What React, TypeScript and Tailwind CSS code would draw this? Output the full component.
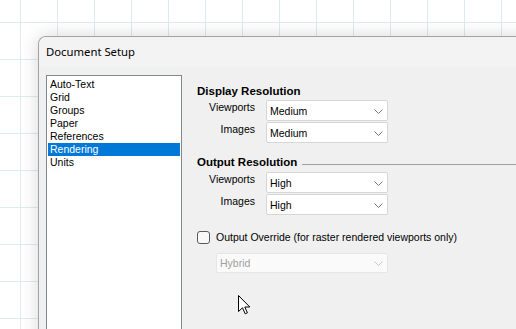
const pages = ["Auto-Text", "Grid", "Groups", "Paper", "References", "Rendering", "Units"];

function Chevron({ muted = false }: { muted?: boolean }) {
  return (
    <svg width="9" height="5" viewBox="0 0 9 5" className="shrink-0">
      <path d="M0.5 0.5 L4.5 4.5 L8.5 0.5" fill="none" stroke={muted ? "#c9c9c9" : "#767676"} strokeWidth="1" />
    </svg>
  );
}

function Combo({ value }: { value: string }) {
  return (
    <div className="flex h-[21px] w-[122px] items-center justify-between rounded-[2px] border border-[#d6d6d6] bg-white pl-[3px] pr-[4px] pt-[1px]">
      <span className="leading-[13px] text-black">{value}</span>
      <Chevron />
    </div>
  );
}

function Row({ label, value }: { label: string; value: string }) {
  return (
    <div className="flex items-start gap-[11px]">
      <span className="w-[58px] pt-[1px] text-right leading-[13px] text-black">{label}</span>
      <Combo value={value} />
    </div>
  );
}

export default function App() {
  return (
    <div className="relative h-[329px] w-[516px] overflow-hidden bg-white bg-[linear-gradient(to_right,#dcecef_1px,transparent_1px),linear-gradient(to_bottom,#dcecef_1px,transparent_1px)] bg-[size:37px_37px] bg-[position:20px_22px]">
      {/* dialog window */}
      <div className="absolute left-[38px] top-[36px] flex h-[320px] w-[500px] flex-col overflow-hidden rounded-tl-[8px] border-l border-t border-[#a3a3a3] bg-[#f0f0f0] shadow-[0_0_18px_rgba(0,0,0,0.16)]">
        <div className="flex h-[30px] shrink-0 items-center bg-[#f3f3f3] pl-[7px] font-['Noto_Sans',sans-serif] text-[11.3px] text-black">
          Document Setup
        </div>
        <div className="flex min-h-0 flex-1 pl-[7px] pt-[8px] font-['Liberation_Sans',Arial,sans-serif] text-[10.5px]">
          {/* page list */}
          <div className="h-[300px] w-[136px] shrink-0 border border-[#828790] bg-white px-px pt-[2px]">
            {pages.map((p) => (
              <div
                key={p}
                className={
                  p === "Rendering"
                    ? "h-[13px] bg-[#0078d7] pl-[2px] leading-[13px] text-white"
                    : "h-[13px] pl-[2px] leading-[13px] text-black"
                }
              >
                {p}
              </div>
            ))}
          </div>

          {/* settings */}
          <div className="flex flex-1 flex-col pl-[15px] pt-[10px]">
            <div className="h-[13px] text-[11.5px] font-bold leading-[13px] text-black">Display Resolution</div>
            <div className="mt-[2px] flex flex-col gap-[1px]">
              <Row label="Viewports" value="Medium" />
              <Row label="Images" value="Medium" />
            </div>

            <div className="mt-[13px] flex items-start">
              <span className="h-[13px] text-[11.5px] font-bold leading-[13px] text-black">Output Resolution</span>
              <div className="ml-[5px] mt-[8px] h-px flex-1 bg-[#a0a0a0]" />
            </div>
            <div className="mt-[3px] flex flex-col gap-[1px]">
              <Row label="Viewports" value="High" />
              <Row label="Images" value="High" />
            </div>

            <label className="mt-[16px] flex h-[13px] items-center gap-[6px]">
              <span className="h-[13px] w-[13px] rounded-[3px] border border-[#5a5a5a] bg-[#f8f8f8]" />
              <span className="leading-[13px] text-black">Output Override (for raster rendered viewports only)</span>
            </label>

            <div className="ml-[19px] mt-[9px] flex h-[20px] w-[172px] items-center justify-between rounded-[2px] border border-[#e6e6e6] bg-[#fafafa] pl-[3px] pr-[4px]">
              <span className="leading-[13px] text-[#a0a0a0]">Hybrid</span>
              <Chevron muted />
            </div>
          </div>
        </div>
      </div>

      {/* mouse pointer */}
      <svg className="absolute left-[238px] top-[295px]" width="13" height="20" viewBox="0 0 13 20">
        <path d="M0.5 0.5 L0.5 16.5 L4.5 12.8 L7.2 18.8 L9.4 17.8 L6.8 12 L11.8 12 Z" fill="white" stroke="black" strokeWidth="1" strokeLinejoin="miter" />
      </svg>
    </div>
  );
}
